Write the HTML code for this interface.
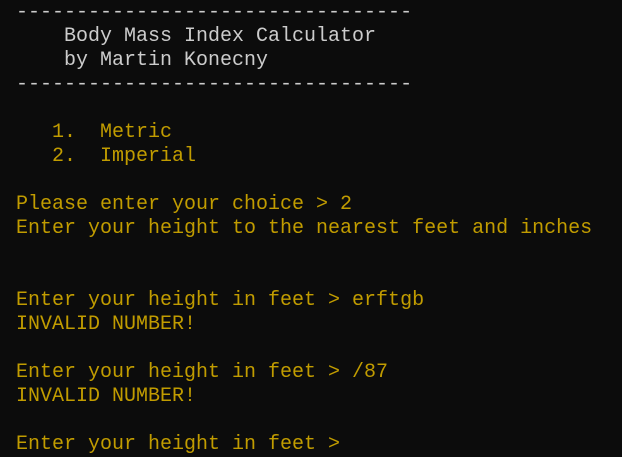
<!DOCTYPE html>
<html><head><meta charset="utf-8"><style>
html,body{margin:0;padding:0;background:#0c0c0c;width:622px;height:457px;overflow:hidden}
pre{margin:0;padding:1px 0 0 16px;font-family:"Liberation Mono",monospace;font-size:20px;line-height:24px;color:#c19c00;white-space:pre}
.w{color:#cccccc}
</style></head><body><pre><span class="w">---------------------------------
    Body Mass Index Calculator
    by Martin Konecny
---------------------------------</span>

   1.  Metric
   2.  Imperial

Please enter your choice &gt; 2
Enter your height to the nearest feet and inches


Enter your height in feet &gt; erftgb
INVALID NUMBER!

Enter your height in feet &gt; /87
INVALID NUMBER!

Enter your height in feet &gt; </pre></body></html>
